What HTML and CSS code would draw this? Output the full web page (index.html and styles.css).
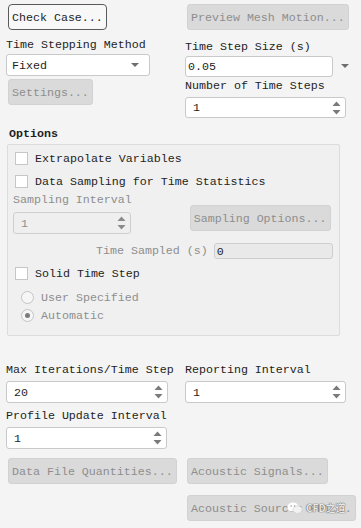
FILE: index.html
```html
<!DOCTYPE html>
<html>
<head>
<meta charset="UTF-8">
<meta name="viewport" content="width=device-width, initial-scale=1.0">
<title>Run Calculation</title>
<link rel="stylesheet" href="styles.css">
</head>
<body>
<div class="page">
    <div class="top">
        <div class="col colLeft">
            <button class="btn">Check Case...</button>
            <div class="lbl lblMethod">Time Stepping Method</div>
            <div class="select">Fixed<span class="caret"></span></div>
            <button class="btn off btnSettings">Settings...</button>
        </div>
        <div class="col colRight">
            <button class="btn off">Preview Mesh Motion...</button>
            <div class="lbl lblStep">Time Step Size (s)</div>
            <div class="fieldRow">
                <div class="input stepSize">0.05</div>
                <span class="caret"></span>
            </div>
            <div class="lbl lblCount">Number of Time Steps</div>
            <div class="spin spinCount">1
                <svg class="arrows" width="9" height="18" viewBox="0 0 9 18"><polygon points="0.5,7 4.5,2.5 8.5,7" /><polygon points="0.5,11 4.5,15.5 8.5,11" /></svg>
            </div>
        </div>
    </div>

    <div class="groupTitle">Options</div>
    <div class="group">
        <div class="check"><span class="box"></span>Extrapolate Variables</div>
        <div class="check"><span class="box"></span>Data Sampling for Time Statistics</div>
        <div class="samplingRow">
            <div class="samplingCol">
                <div class="lbl dim">Sampling Interval</div>
                <div class="spin spinOff">1
                    <svg class="arrows" width="9" height="18" viewBox="0 0 9 18"><polygon points="0.5,7 4.5,2.5 8.5,7" /><polygon points="0.5,11 4.5,15.5 8.5,11" /></svg>
                </div>
            </div>
            <button class="btn off btnSampling">Sampling Options...</button>
        </div>
        <div class="sampledRow">
            <span class="lbl dim">Time Sampled (s)</span>
            <div class="input inputOff">0</div>
        </div>
        <div class="check checkSolid"><span class="box"></span>Solid Time Step</div>
        <div class="radios">
            <div class="radio"><span class="dot"></span>User Specified</div>
            <div class="radio"><span class="dot on"></span>Automatic</div>
        </div>
    </div>

    <div class="bottom">
        <div class="lbl lblIter">Max Iterations/Time Step</div>
        <div class="lbl lblIter">Reporting Interval</div>
        <div class="spin spinIter">20
            <svg class="arrows" width="9" height="18" viewBox="0 0 9 18"><polygon points="0.5,7 4.5,2.5 8.5,7" /><polygon points="0.5,11 4.5,15.5 8.5,11" /></svg>
        </div>
        <div class="spin spinReport">1
            <svg class="arrows" width="9" height="18" viewBox="0 0 9 18"><polygon points="0.5,7 4.5,2.5 8.5,7" /><polygon points="0.5,11 4.5,15.5 8.5,11" /></svg>
        </div>
        <div class="lbl lblProfile">Profile Update Interval</div>
        <div></div>
        <div class="spin spinProfile">1
            <svg class="arrows" width="9" height="18" viewBox="0 0 9 18"><polygon points="0.5,7 4.5,2.5 8.5,7" /><polygon points="0.5,11 4.5,15.5 8.5,11" /></svg>
        </div>
        <div></div>
        <div class="btnCell"><button class="btn off">Data File Quantities...</button></div>
        <div class="btnCell"><button class="btn off">Acoustic Signals...</button></div>
        <div></div>
        <div class="btnCell lastCell">
            <button class="btn off">Acoustic Sources FFT...</button>
            <span class="mark">
                <svg width="16" height="14" viewBox="0 0 16 14"><ellipse cx="6" cy="6" rx="5.5" ry="4.6" fill="#fff" /><ellipse cx="10.5" cy="8.6" rx="4.6" ry="3.8" fill="#f2f2f2" stroke="#ccc" stroke-width="0.6" /><circle cx="4.2" cy="5" r="0.8" fill="#999" /><circle cx="7.6" cy="5" r="0.8" fill="#999" /></svg>
                <span class="markText">CFD之道</span>
            </span>
        </div>
    </div>
</div>
</body>
</html>
```

FILE: styles.css
```css
    :root {
        --bg: #f4f4f4;
        --text: #1e1e1e;
        --dim: #8e8e8e;
        --line: #c9c9c9;
    }
    body {
        margin: 0;
        background: var(--bg);
        color: var(--text);
        font-family: "Liberation Mono", "DejaVu Sans Mono", monospace;
        font-size: 11.65px;
    }
    .page {
        padding: 4px 0 0 6px;
        width: 355px;
    }
    .top {
        display: flex;
    }
    .colLeft {
        width: 179px;
    }
    .col {
        display: flex;
        flex-direction: column;
        align-items: flex-start;
    }
    .lbl {
        line-height: 14px;
        height: 14px;
        white-space: nowrap;
    }
    .dim {
        color: var(--dim);
    }
    .btn {
        font: inherit;
        color: var(--text);
        height: 26px;
        padding: 0 3px;
        margin-left: 2px;
        border: 1px solid #5a5a5a;
        border-radius: 4px;
        background: #f8f8f8;
        text-align: left;
        white-space: nowrap;
    }
    .btn.off {
        color: var(--dim);
        background: #dadada;
        border-color: #d2d2d2;
        border-radius: 3px;
    }
    .lblMethod {
        margin-top: 8px;
    }
    .select {
        box-sizing: border-box;
        margin-top: 2px;
        width: 144px;
        height: 22px;
        padding: 0 5px;
        background: #fff;
        border: 1px solid var(--line);
        border-radius: 3px;
        display: flex;
        align-items: center;
        justify-content: space-between;
    }
    .caret {
        width: 0;
        height: 0;
        border-left: 4px solid transparent;
        border-right: 4px solid transparent;
        border-top: 4px solid #6e6e6e;
        margin-right: 5px;
    }
    .btnSettings {
        margin-top: 3px;
    }
    .lblStep {
        margin-top: 10px;
    }
    .fieldRow {
        margin-top: 2px;
        display: flex;
        align-items: center;
        gap: 8px;
    }
    .fieldRow .caret {
        margin-top: -2px;
    }
    .input {
        box-sizing: border-box;
        height: 21px;
        padding: 0 2px;
        background: #fff;
        border: 1px solid var(--line);
        border-radius: 3px;
        display: flex;
        align-items: center;
    }
    .stepSize {
        width: 148px;
    }
    .lblCount {
        margin-top: 2px;
    }
    .spin {
        box-sizing: border-box;
        position: relative;
        height: 22px;
        padding: 0 7px;
        background: #fff;
        border: 1px solid var(--line);
        border-radius: 3px;
        display: flex;
        align-items: center;
        justify-content: space-between;
    }
    .arrows {
        fill: #7a7a7a;
        margin-right: -3px;
    }
    .spinCount {
        margin-top: 4px;
        width: 161px;
        height: 21px;
    }
    .groupTitle {
        margin: 9px 0 0 3px;
        line-height: 14px;
        font-weight: bold;
    }
    .group {
        margin: 3px 0 0 1px;
        width: 333px;
        box-sizing: border-box;
        padding: 2px 0 11px 0;
        background: #f0f0f0;
        border: 1px solid #dcdcdc;
        border-radius: 2px;
    }
    .check {
        height: 23px;
        display: flex;
        align-items: center;
        gap: 7px;
        padding-left: 7px;
    }
    .box {
        width: 13px;
        height: 13px;
        box-sizing: border-box;
        background: #fff;
        border: 1px solid #c6c6c6;
    }
    .samplingRow {
        display: flex;
        align-items: flex-end;
        padding-left: 5px;
    }
    .samplingCol .spin {
        margin-top: 5px;
        width: 118px;
    }
    .spinOff {
        color: var(--dim);
        background: #efefef;
        border-color: #cfcfcf;
    }
    .spinOff .arrows {
        fill: #8a8a8a;
    }
    .btnSampling {
        margin: 0 0 3px 58px;
    }
    .sampledRow {
        margin-top: 9px;
        display: flex;
        align-items: center;
        gap: 6px;
        padding-left: 88px;
    }
    .inputOff {
        width: 119px;
        height: 16px;
        background: #e9e9e9;
        border-color: #cdcdcd;
    }
    .checkSolid {
        margin-top: 3px;
    }
    .radios {
        margin-top: 3px;
        color: var(--dim);
        padding-left: 13px;
    }
    .radio {
        height: 18px;
        display: flex;
        align-items: center;
        gap: 7px;
    }
    .dot {
        width: 13px;
        height: 13px;
        box-sizing: border-box;
        border-radius: 50%;
        border: 1px solid #c4c4c4;
        background: #f6f6f6;
        display: flex;
        align-items: center;
        justify-content: center;
    }
    .dot.on::after {
        content: "";
        width: 5px;
        height: 5px;
        border-radius: 50%;
        background: #7c7c7c;
    }
    .bottom {
        margin-top: 27px;
        display: grid;
        grid-template-columns: 179px auto;
        align-items: start;
    }
    .spinIter {
        margin-top: 4px;
        width: 162px;
    }
    .spinReport {
        margin-top: 4px;
        width: 161px;
    }
    .lblProfile {
        margin-top: 6px;
    }
    .spinProfile {
        margin-top: 4px;
        width: 161px;
    }
    .btnCell {
        margin-top: 9px;
    }
    .lastCell {
        margin-top: 11px;
        position: relative;
    }
    .mark {
        position: absolute;
        left: 102px;
        top: 5px;
        display: flex;
        align-items: center;
        gap: 3px;
    }
    .markText {
        font-family: "Noto Sans CJK SC", sans-serif;
        font-size: 10px;
        font-weight: bold;
        color: #e8e8e8;
        text-shadow: 0 0 1px #555, 0 0 1px #555;
    }
```
